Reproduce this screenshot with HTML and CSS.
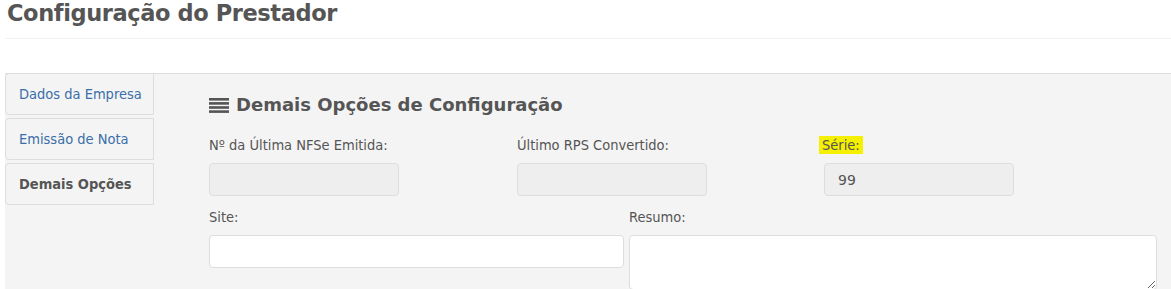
FILE: index.html
```html
<!DOCTYPE html>
<html lang="pt-BR">
<head>
<meta charset="utf-8">
<title>Configuração do Prestador</title>
<link rel="stylesheet" href="styles.css">
</head>
<body>
<h1 class="page-title">Configuração do Prestador</h1>
<div class="divider"></div>
<div class="panel">
  <ul class="tabs">
    <li class="tab"><a class="tab-link">Dados da Empresa</a></li>
    <li class="tab"><a class="tab-link">Emissão de Nota</a></li>
    <li class="tab active"><a class="tab-link">Demais Opções</a></li>
  </ul>
  <div class="content">
    <h2 class="section-title">
      <svg class="list-icon" width="20" height="15" viewBox="0 0 20 15"><rect x="0" y="0" width="20" height="2.6" fill="#555"/><rect x="0" y="4.1" width="20" height="2.6" fill="#555"/><rect x="0" y="8.2" width="20" height="2.6" fill="#555"/><rect x="0" y="12.3" width="20" height="2.6" fill="#555"/></svg>
      <span>Demais Opções de Configuração</span>
    </h2>
    <div class="row row-top">
      <div class="field col-a">
        <label class="label">Nº da Última NFSe Emitida:</label>
        <input class="input" type="text" disabled>
      </div>
      <div class="field col-a">
        <label class="label">Último RPS Convertido:</label>
        <input class="input" type="text" disabled>
      </div>
      <div class="field col-c">
        <label class="label label-hl"><mark class="hl">Série:</mark></label>
        <input class="input" type="text" value="99" disabled>
      </div>
    </div>
    <div class="row row-bottom">
      <div class="field col-site">
        <label class="label">Site:</label>
        <input class="input white" type="text">
      </div>
      <div class="field col-resumo">
        <label class="label">Resumo:</label>
        <textarea class="textarea"></textarea>
      </div>
    </div>
  </div>
</div>
</body>
</html>
```

FILE: styles.css
```css
html, body {
  margin: 0;
  padding: 0;
  background: #ffffff;
  overflow: hidden;
}
body {
  font-family: "DejaVu Sans Condensed", "DejaVu Sans", sans-serif;
  font-stretch: condensed;
  color: #555555;
  padding-left: 5px;
}
.page-title {
  margin: 0;
  padding: 1px 0 0 2px;
  font-family: "DejaVu Sans", sans-serif;
  font-stretch: normal;
  font-weight: bold;
  font-size: 22.5px;
  letter-spacing: -0.4px;
  line-height: 24px;
  color: #555555;
}
.divider {
  height: 1px;
  background: #f2f2f2;
  margin-top: 13px;
}
.panel {
  margin-top: 34px;
  background: #f4f4f4;
  border-top: 1px solid #dddddd;
  display: flex;
  align-items: flex-start;
  height: 220px;
}
.tabs {
  list-style: none;
  margin: -1px 0 0 0;
  padding: 0;
  width: 149px;
  flex: none;
  display: flex;
  flex-direction: column;
  gap: 3px;
}
.tab {
  height: 40px;
  border: 1px solid #dddddd;
  border-radius: 4px 0 0 4px;
  background: #f4f4f4;
  display: flex;
  align-items: center;
}
.tab-link {
  padding-left: 13px;
  font-size: 14.5px;
  color: #3a6ea8;
}
.tab.active .tab-link {
  color: #555555;
  font-weight: bold;
}
.content {
  margin-left: 55px;
  padding-top: 20px;
  flex: 1;
}
.section-title {
  margin: 0;
  font-family: "DejaVu Sans", sans-serif;
  font-stretch: normal;
  font-weight: bold;
  font-size: 18px;
  line-height: 22px;
  display: flex;
  align-items: center;
  gap: 7px;
  color: #555555;
}
.list-icon { flex: none; }
.row {
  display: flex;
}
.row-top {
  margin-top: 20px;
  gap: 118px;
}
.row-bottom {
  margin-top: 12px;
  gap: 5px;
}
.field {
  display: flex;
  flex-direction: column;
}
.col-a, .col-c { width: 190px; }
.col-c { margin-left: -1px; }
.col-site { width: 415px; }
.col-resumo { width: 528px; }
.label {
  font-size: 14.5px;
  line-height: 19px;
  height: 19px;
  margin-bottom: 8px;
}
.label-hl {
  margin-left: -5px;
}
.hl {
  background: #f5ef00;
  color: #555555;
  padding: 1px 3px;
}
.input {
  box-sizing: border-box;
  height: 33px;
  width: 100%;
  margin: 0;
  border: 1px solid #dddddd;
  border-radius: 4px;
  background: #eeeeee;
  padding: 0 13px;
  font-family: "DejaVu Sans", sans-serif;
  font-size: 14px;
  color: #555555;
}
.input.white {
  background: #ffffff;
}
.textarea {
  box-sizing: border-box;
  height: 55px;
  width: 100%;
  margin: 0;
  border: 1px solid #dddddd;
  border-radius: 4px;
  background: #ffffff;
  resize: vertical;
}
```
